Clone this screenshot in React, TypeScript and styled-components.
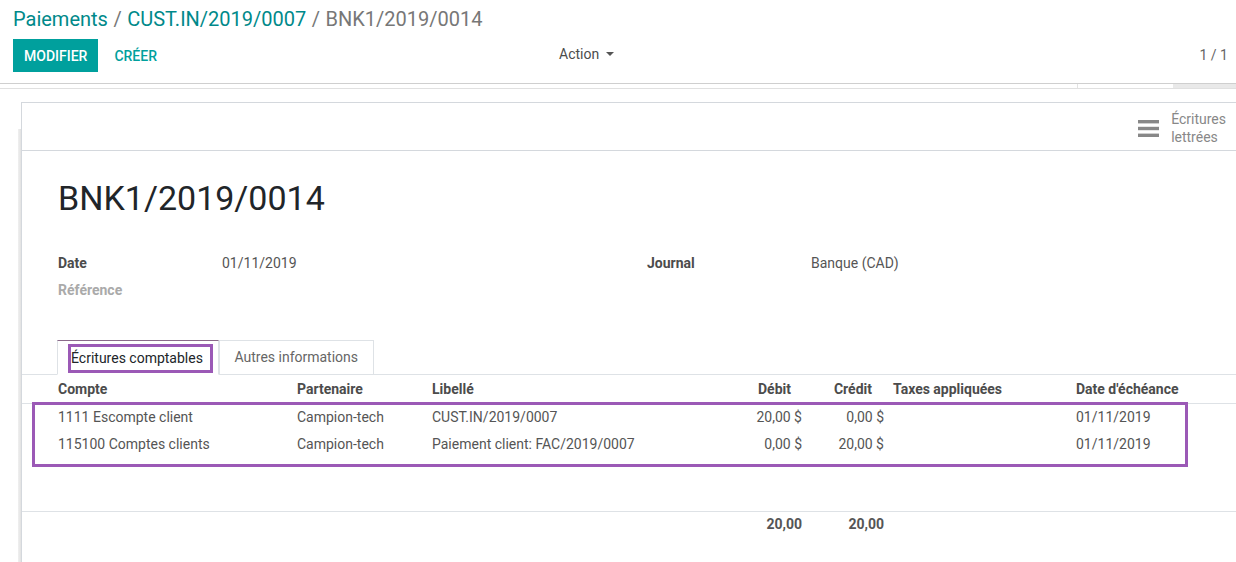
import React from 'react';
import styled, { createGlobalStyle } from 'styled-components';

const GlobalStyle = createGlobalStyle`
  * { box-sizing: border-box; }
  html, body { margin: 0; padding: 0; background: #fff; }
  body {
    font-family: Roboto, "Noto Sans", "Liberation Sans", sans-serif;
    font-size: 14px;
    color: #4c4c4c;
    width: 1236px;
    height: 562px;
    overflow: hidden;
  }
`;

const ControlPanel = styled.header`
  padding: 4px 8px 11px 13px;
  border-bottom: 1px solid #cfcfcf;
`;

const Breadcrumb = styled.div`
  height: 30px;
  line-height: 30px;
  font-size: 20px;
  white-space: nowrap;
`;

const Crumb = styled.span<{ $active?: boolean }>`
  color: ${(p) => (p.$active ? '#777' : '#00898a')};
`;

const Sep = styled.span`
  color: #777;
  padding: 0 5.5px;
`;

const ButtonRow = styled.div`
  margin-top: 5px;
  height: 33px;
  display: grid;
  grid-template-columns: 546px 1fr auto;
  align-items: center;
`;

const Buttons = styled.div`
  display: flex;
  align-items: center;
  gap: 5px;
`;

const Btn = styled.button<{ $primary?: boolean }>`
  height: 33px;
  padding: 0 11px;
  border: none;
  font-family: inherit;
  font-size: 14px;
  font-weight: 500;
  text-transform: uppercase;
  background: ${(p) => (p.$primary ? '#00a09d' : 'transparent')};
  color: ${(p) => (p.$primary ? '#fff' : '#00a09d')};
`;

const ActionToggle = styled.div`
  display: flex;
  align-items: center;
  gap: 7px;
  color: #4c4c4c;
  font-size: 14px;
  padding-bottom: 3px;
`;

const Caret = styled.span`
  width: 0;
  height: 0;
  border-left: 4px solid transparent;
  border-right: 4px solid transparent;
  border-top: 4px solid #555;
`;

const Pager = styled.div`
  color: #666;
  font-size: 14px;
  padding-bottom: 2px;
`;

const Strip = styled.div`
  height: 5px;
  border-bottom: 1px solid #e0e0e0;
  display: flex;
`;

const StripGap = styled.div<{ $w: number }>`
  width: ${(p) => p.$w}px;
`;

const StripTick = styled.div`
  width: 96px;
  border-left: 1px solid #e3e3e3;
`;

const StripThumb = styled.div`
  flex: 1;
  background: #e9e9e9;
`;

const FormArea = styled.main`
  padding: 13px 0 0 21px;
`;

const Sheet = styled.section`
  position: relative;
  border: 1px solid #d4d8dd;
  border-right: none;
  border-bottom: none;
  min-height: 480px;
  background: #fff;
  &::before {
    content: '';
    position: absolute;
    left: -4px;
    top: 26px;
    bottom: 0;
    width: 3px;
    background: linear-gradient(to right, #f0f0f0, #e2e2e2);
  }
`;

const ButtonBox = styled.div`
  height: 48px;
  border-bottom: 1px solid #d4d8dd;
  display: flex;
  justify-content: flex-end;
  align-items: center;
  padding: 3px 10px 0 0;
`;

const SmartButton = styled.div`
  display: flex;
  align-items: center;
  gap: 12px;
  color: #888;
  font-size: 14px;
  line-height: 18px;
`;

const Title = styled.h1`
  margin: 26px 0 0 36px;
  font-size: 34px;
  line-height: 42px;
  font-weight: 400;
  color: #212529;
`;

const Fields = styled.div`
  margin-top: 30px;
  padding-left: 36px;
  display: grid;
  grid-template-columns: 589px 1fr;
`;

const Group = styled.div`
  display: grid;
  grid-template-columns: 164px 1fr;
  grid-auto-rows: 27px;
  align-items: center;
`;

const Label = styled.div<{ $muted?: boolean }>`
  font-weight: 700;
  color: ${(p) => (p.$muted ? '#aaa' : '#4c4c4c')};
`;

const Value = styled.div`
  color: #555;
`;

const TabStrip = styled.div`
  margin-top: 37px;
  padding-left: 35px;
  display: flex;
  border-bottom: 1px solid #dee2e6;
`;

const Tab = styled.div<{ $active?: boolean }>`
  height: 35px;
  margin-bottom: -1px;
  border: 1px solid #dee2e6;
  border-top-color: ${(p) => (p.$active ? '#8a6a8a' : '#dee2e6')};
  border-bottom-color: ${(p) => (p.$active ? '#fff' : '#dee2e6')};
  background: #fff;
  color: ${(p) => (p.$active ? '#212529' : '#666')};
  padding: ${(p) => (p.$active ? '3px 5px 0 10px' : '0 14.5px')};
  line-height: 33px;
  white-space: nowrap;
`;

const TabHighlight = styled.span`
  display: inline-block;
  border: 3px solid #9b59b6;
  line-height: 23px;
  padding: 0 7px 0 0;
  vertical-align: top;
`;

const TableWrap = styled.div`
  position: relative;
`;

const Table = styled.table`
  width: 100%;
  table-layout: fixed;
  border-collapse: collapse;
`;

const Th = styled.th<{ $align?: 'left' | 'right'; $pl?: number; $pr?: number }>`
  height: 28px;
  padding: 0 ${(p) => p.$pr ?? 0}px 0 ${(p) => p.$pl ?? 0}px;
  text-align: ${(p) => p.$align ?? 'left'};
  font-weight: 700;
  color: #4c4c4c;
  border-bottom: 1px solid #dee2e6;
  white-space: nowrap;
`;

const Td = styled.td<{ $align?: 'left' | 'right'; $pl?: number; $pr?: number; $bold?: boolean }>`
  height: 27px;
  padding: 0 ${(p) => p.$pr ?? 0}px 0 ${(p) => p.$pl ?? 0}px;
  text-align: ${(p) => p.$align ?? 'left'};
  font-weight: ${(p) => (p.$bold ? 700 : 400)};
  color: #555;
  white-space: nowrap;
`;

const FootRow = styled.tr`
  border-top: 1px solid #dee2e6;
  td { height: 25px; }
`;

const RowsHighlight = styled.div`
  position: absolute;
  left: 10px;
  top: 27px;
  width: 1156px;
  height: 65px;
  border: 3px solid #9b59b6;
  pointer-events: none;
`;

const BarsIcon = () => (
  <svg width="21" height="17" viewBox="0 0 21 17" aria-hidden="true">
    <rect x="0" y="0" width="21" height="3.4" fill="#888" />
    <rect x="0" y="6.8" width="21" height="3.4" fill="#888" />
    <rect x="0" y="13.6" width="21" height="3.4" fill="#888" />
  </svg>
);

const lines = [
  {
    compte: '1111 Escompte client',
    partenaire: 'Campion-tech',
    libelle: 'CUST.IN/2019/0007',
    debit: '20,00 $',
    credit: '0,00 $',
    date: '01/11/2019',
  },
  {
    compte: '115100 Comptes clients',
    partenaire: 'Campion-tech',
    libelle: 'Paiement client: FAC/2019/0007',
    debit: '0,00 $',
    credit: '20,00 $',
    date: '01/11/2019',
  },
];

export default function App() {
  return (
    <>
      <GlobalStyle />
      <ControlPanel>
        <Breadcrumb>
          <Crumb>Paiements</Crumb>
          <Sep>/</Sep>
          <Crumb>CUST.IN/2019/0007</Crumb>
          <Sep>/</Sep>
          <Crumb $active>BNK1/2019/0014</Crumb>
        </Breadcrumb>
        <ButtonRow>
          <Buttons>
            <Btn $primary>Modifier</Btn>
            <Btn>Créer</Btn>
          </Buttons>
          <ActionToggle>
            Action <Caret />
          </ActionToggle>
          <Pager>1 / 1</Pager>
        </ButtonRow>
      </ControlPanel>
      <Strip>
        <StripGap $w={1077} />
        <StripTick />
        <StripThumb />
      </Strip>
      <FormArea>
        <Sheet>
          <ButtonBox>
            <SmartButton>
              <BarsIcon />
              <div>
                Écritures
                <br />
                lettrées
              </div>
            </SmartButton>
          </ButtonBox>
          <Title>BNK1/2019/0014</Title>
          <Fields>
            <Group>
              <Label>Date</Label>
              <Value>01/11/2019</Value>
              <Label $muted>Référence</Label>
              <Value />
            </Group>
            <Group>
              <Label>Journal</Label>
              <Value>Banque (CAD)</Value>
            </Group>
          </Fields>
          <TabStrip>
            <Tab $active>
              <TabHighlight>Écritures comptables</TabHighlight>
            </Tab>
            <Tab>Autres informations</Tab>
          </TabStrip>
          <TableWrap>
            <Table>
              <colgroup>
                <col style={{ width: 275 }} />
                <col style={{ width: 135 }} />
                <col style={{ width: 276 }} />
                <col style={{ width: 100 }} />
                <col style={{ width: 82 }} />
                <col style={{ width: 186 }} />
                <col />
              </colgroup>
              <thead>
                <tr>
                  <Th $pl={36}>Compte</Th>
                  <Th>Partenaire</Th>
                  <Th>Libellé</Th>
                  <Th $align="right" $pr={17}>Débit</Th>
                  <Th $align="right" $pr={18}>Crédit</Th>
                  <Th $pl={3}>Taxes appliquées</Th>
                  <Th>Date d'échéance</Th>
                </tr>
              </thead>
              <tbody>
                {lines.map((l) => (
                  <tr key={l.compte}>
                    <Td $pl={36}>{l.compte}</Td>
                    <Td>{l.partenaire}</Td>
                    <Td>{l.libelle}</Td>
                    <Td $align="right" $pr={6}>{l.debit}</Td>
                    <Td $align="right" $pr={6}>{l.credit}</Td>
                    <Td $pl={3} />
                    <Td>{l.date}</Td>
                  </tr>
                ))}
                {[0, 1].map((i) => (
                  <tr key={`empty-${i}`}>
                    <Td colSpan={7} />
                  </tr>
                ))}
              </tbody>
              <tfoot>
                <FootRow>
                  <Td />
                  <Td />
                  <Td />
                  <Td $align="right" $pr={6} $bold>20,00</Td>
                  <Td $align="right" $pr={6} $bold>20,00</Td>
                  <Td />
                  <Td />
                </FootRow>
              </tfoot>
            </Table>
            <RowsHighlight />
          </TableWrap>
        </Sheet>
      </FormArea>
    </>
  );
}
